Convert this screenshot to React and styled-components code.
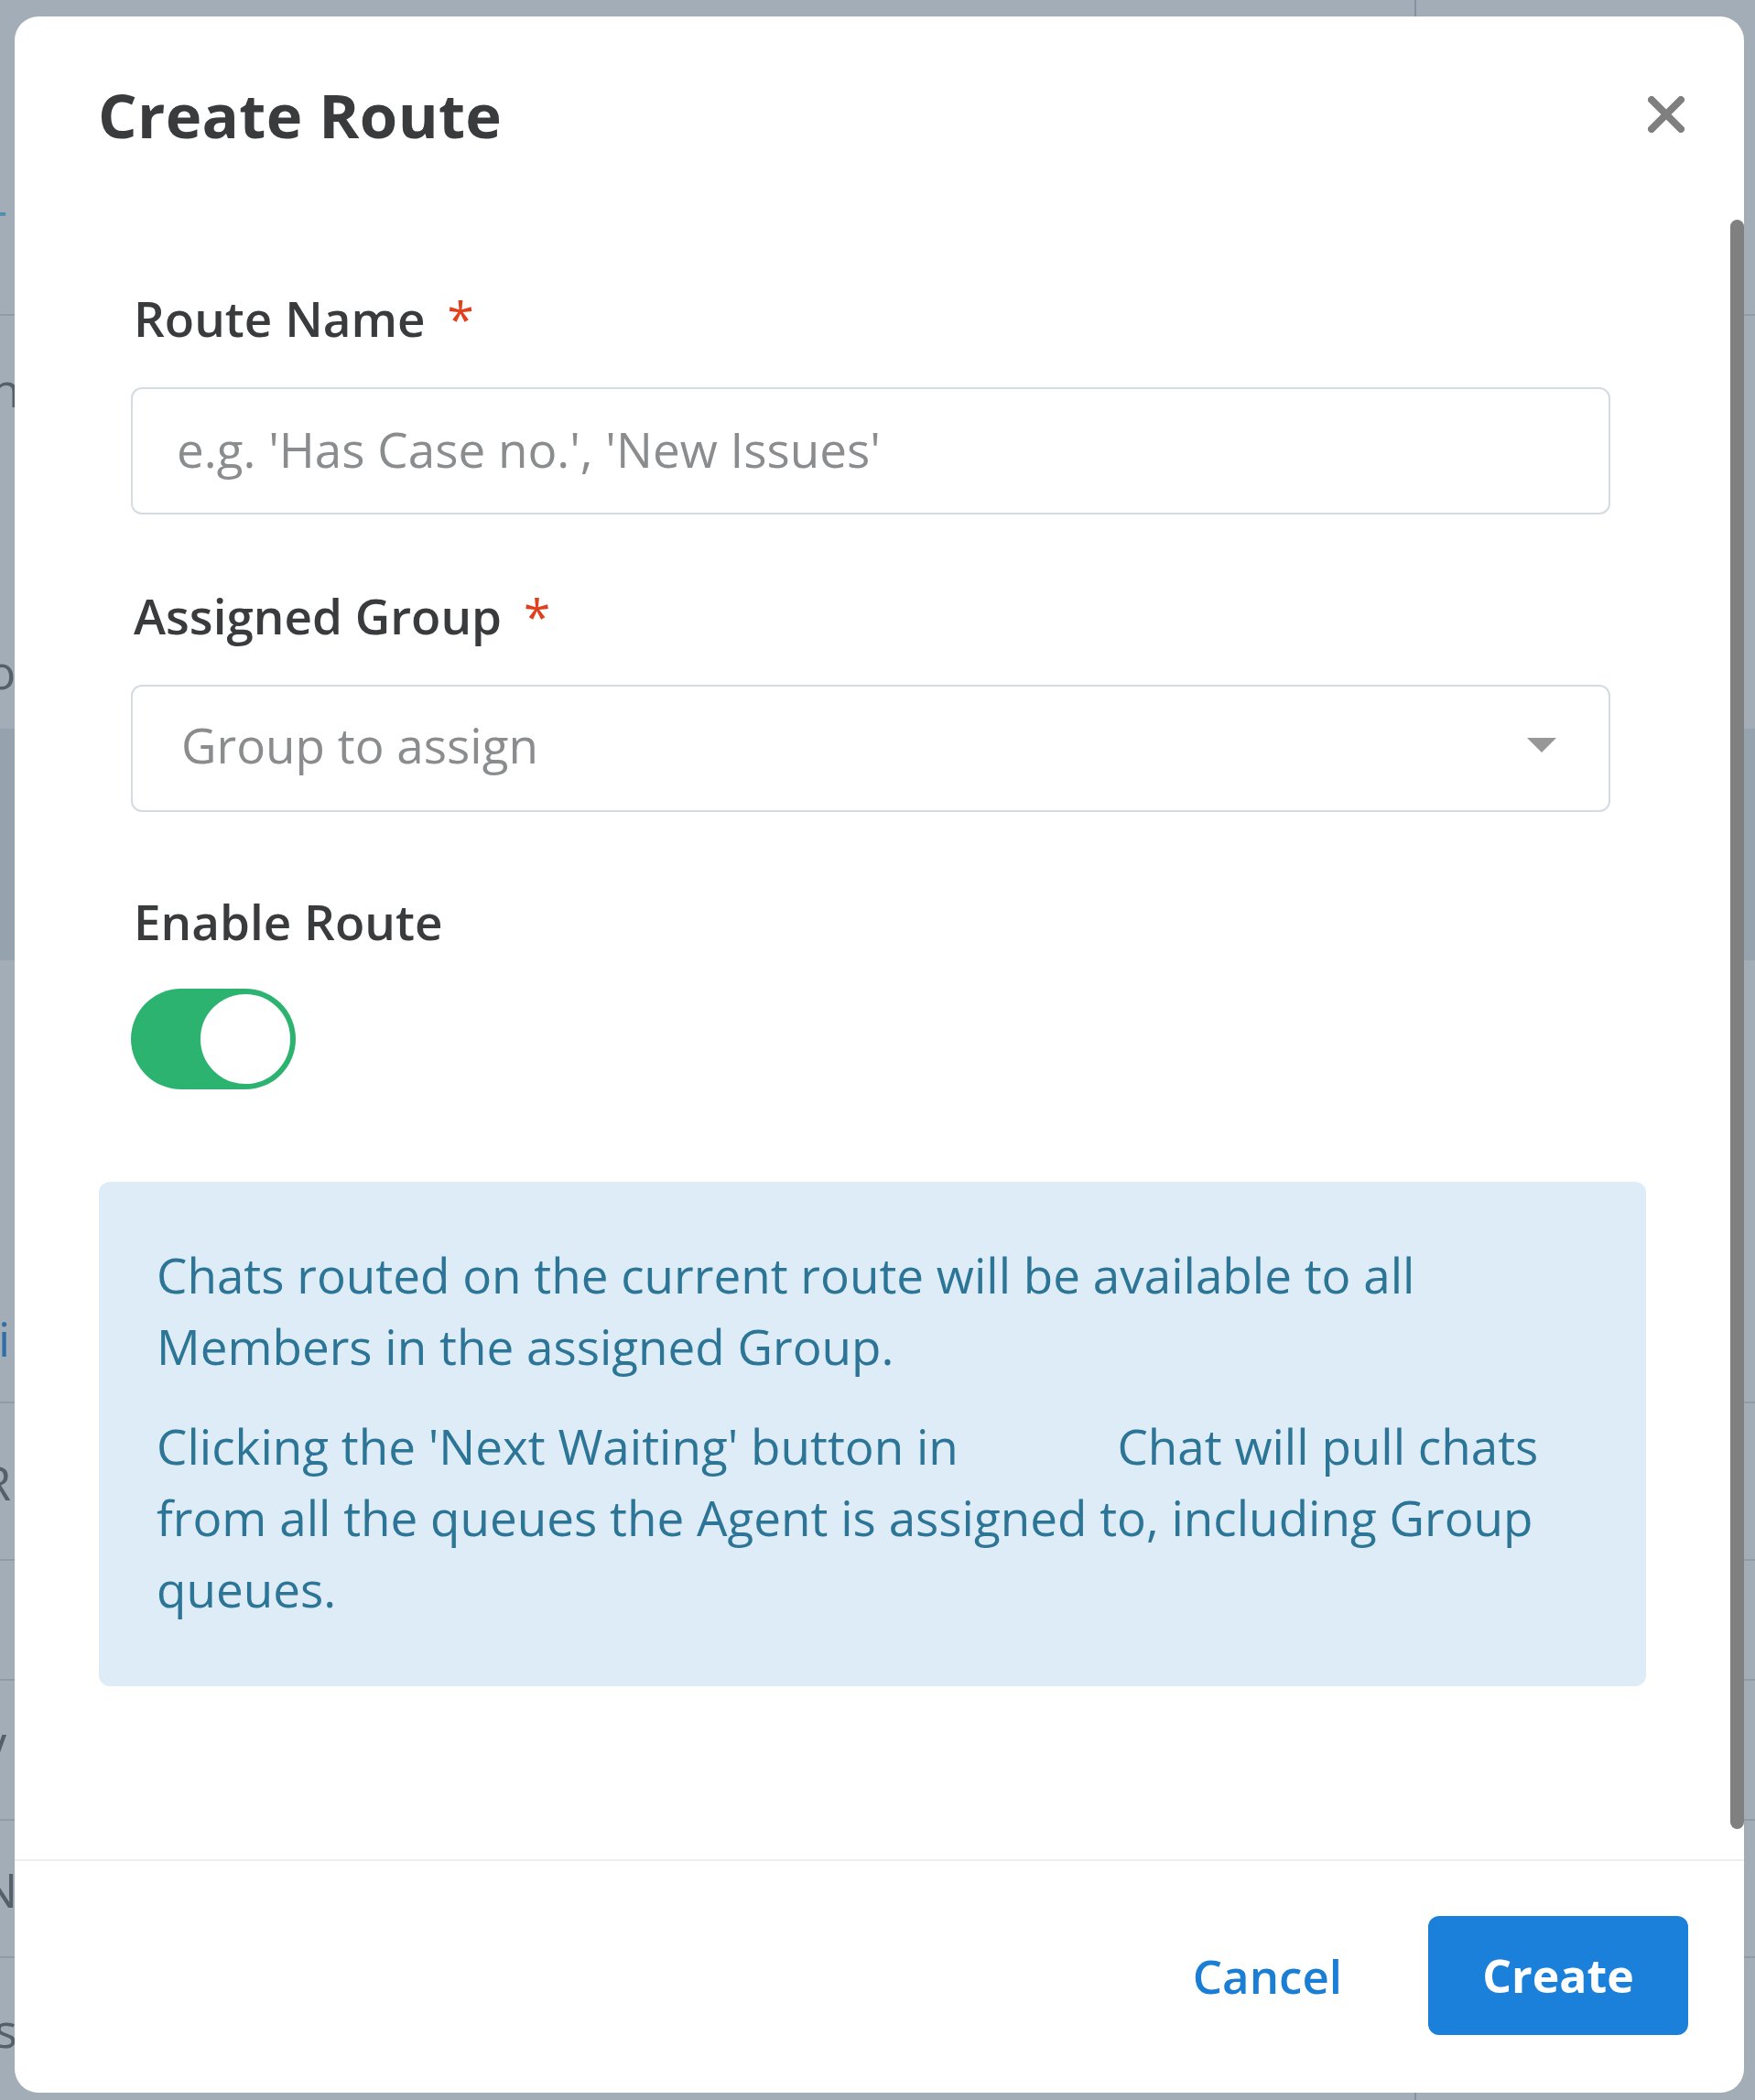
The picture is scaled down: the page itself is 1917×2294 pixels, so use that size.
import React from "react";
import styled, { createGlobalStyle } from "styled-components";

const Global = createGlobalStyle`
  html, body { margin: 0; padding: 0; }
  body {
    background: #a2adb7;
    font-family: "Open Sans", "Noto Sans", sans-serif;
  }
`;

const Screen = styled.div`
  position: relative;
  width: 1917px;
  height: 2294px;
  overflow: hidden;
  background: #a2adb7;
`;

/* dimmed page content behind the dialog */
const Page = styled.div`
  display: flex;
  flex-direction: column;
  height: 100%;
`;

const BgRow = styled.div`
  flex: 0 0 ${(p) => p.$h}px;
  box-sizing: border-box;
  padding-top: ${(p) => p.$off || 0}px;
  border-bottom: ${(p) => (p.$line ? "2px solid rgba(120, 132, 145, 0.45)" : "0")};
  background: ${(p) => (p.$band ? "#96a2ad" : "transparent")};
  overflow: hidden;
`;

const BgText = styled.div`
  font-size: 52px;
  line-height: 72px;
  margin-left: ${(p) => p.$x}px;
  color: ${(p) => p.$c || "#56606a"};
  white-space: nowrap;
`;

const Overlay = styled.div`
  position: absolute;
  inset: 0;
  box-sizing: border-box;
  padding: 18px 12px 8px 16px;
  background: linear-gradient(90deg, transparent 1545px, rgba(120,135,150,0.7) 1545px, rgba(120,135,150,0.7) 1547px, transparent 1547px);
`;

const Modal = styled.div`
  position: relative;
  width: 1889px;
  height: 2268px;
  background: #ffffff;
  border-radius: 26px;
  display: flex;
  flex-direction: column;
  overflow: hidden;
`;

const Header = styled.div`
  display: flex;
  align-items: center;
  justify-content: space-between;
  height: 222px;
  box-sizing: border-box;
  padding: 0 63px 8px 91px;
`;

const Title = styled.h1`
  margin: 0;
  font-size: 67px;
  line-height: 80px;
  font-weight: 700;
  color: #3a3b3d;
  letter-spacing: 0.3px;
`;

const CloseButton = styled.button`
  border: 0;
  background: none;
  padding: 0;
  width: 44px;
  height: 44px;
  display: flex;
  align-items: center;
  justify-content: center;
  cursor: pointer;
`;

const Body = styled.div`
  position: relative;
  flex: 1;
  padding: 72px 107px 0 92px;
`;

const Thumb = styled.div`
  position: absolute;
  right: 0;
  top: 0;
  width: 15px;
  height: 1758px;
  background: #808080;
  border-radius: 8px;
`;

const Fields = styled.div`
  padding: 0 39px 0 35px;
  display: flex;
  flex-direction: column;
`;

const Label = styled.div`
  font-size: 53px;
  line-height: 72px;
  font-weight: 600;
  color: #3a3b3d;
  margin-top: ${(p) => p.$top || 0}px;
  margin-bottom: ${(p) => p.$bottom || 39}px;
  padding-left: 3px;
`;

const Required = styled.span`
  color: #e2401c;
  margin-left: 24px;
  font-weight: 400;
`;

const InputBox = styled.div`
  box-sizing: border-box;
  height: 139px;
  border: 2px solid #d6dbe1;
  border-radius: 12px;
  display: flex;
  align-items: center;
  justify-content: space-between;
  padding: 0 57px ${(p) => p.$lift}px ${(p) => p.$pad}px;
  font-size: 53px;
  color: #8b8c8e;
`;

const Caret = styled.span`
  width: 0;
  height: 0;
  border-left: 16px solid transparent;
  border-right: 16px solid transparent;
  border-top: 16px solid #979797;
`;

const Toggle = styled.div`
  box-sizing: border-box;
  width: 180px;
  height: 110px;
  border-radius: 55px;
  background: #2db370;
  display: flex;
  align-items: center;
  justify-content: flex-end;
  padding: 0 3px;
`;

const Knob = styled.div`
  box-sizing: border-box;
  width: 104px;
  height: 104px;
  border-radius: 50%;
  background: #ffffff;
  border: 3px solid #2db370;
`;

const Info = styled.div`
  margin-top: 101px;
  box-sizing: border-box;
  height: 551px;
  background: #ddecf7;
  border-radius: 12px;
  padding: 63px 40px 0 63px;
  color: #2c7596;
  font-size: 53px;
  line-height: 78px;
`;

const Para = styled.p`
  margin: 0 0 ${(p) => p.$gap || 0}px 0;
`;

const Gap = styled.span`
  display: inline-block;
  width: 146px;
  height: 1px;
`;

const Footer = styled.div`
  border-top: 2px solid #eeeeee;
  height: 255px;
  box-sizing: border-box;
  display: flex;
  align-items: center;
  justify-content: flex-end;
  gap: 62px;
  padding: 0 61px 4px 0;
`;

const CancelButton = styled.button`
  border: 0;
  background: none;
  font-family: inherit;
  font-size: 51px;
  font-weight: 600;
  color: #1a7ed4;
  padding: 0 32px;
  height: 130px;
  cursor: pointer;
`;

const CreateButton = styled.button`
  border: 0;
  width: 284px;
  height: 130px;
  border-radius: 12px;
  background: #1a80d9;
  color: #ffffff;
  font-family: inherit;
  font-size: 50px;
  font-weight: 700;
  cursor: pointer;
`;

const bgRows = [
  { h: 345, t: "T", x: -22, c: "#4f8fa8", off: 213, line: true },
  { h: 300, t: "n", x: -10, off: 44 },
  { h: 151, t: "o", x: -14, off: 52 },
  { h: 253, band: true },
  { h: 341 },
  { h: 143, t: "i", x: -2, c: "#2f6fa6", off: 36, line: true },
  { h: 172, t: "R", x: -20, off: 50, line: true },
  { h: 131, line: true },
  { h: 153, t: "V", x: -24, off: 40, line: true },
  { h: 150, t: "N", x: -20, off: 39, line: true },
  { h: 155, t: "sl", x: -6, off: 42 },
];

export default function App() {
  return (
    <>
      <Global />
      <Screen>
        <Page>
          {bgRows.map((r, i) => (
            <BgRow key={i} $h={r.h} $band={r.band} $off={r.off} $line={r.line}>
              {r.t ? (
                <BgText $x={r.x} $c={r.c}>
                  {r.t}
                </BgText>
              ) : null}
            </BgRow>
          ))}
        </Page>
        <Overlay>
          <Modal>
            <Header>
              <Title>Create Route</Title>
              <CloseButton aria-label="Close">
                <svg width="40" height="40" viewBox="0 0 40 40">
                  <path d="M4 4 L36 36 M36 4 L4 36" stroke="#7f7f7f" strokeWidth="8" strokeLinecap="round" />
                </svg>
              </CloseButton>
            </Header>
            <Body>
              <Thumb />
              <Fields>
                <Label>
                  Route Name<Required>*</Required>
                </Label>
                <InputBox $pad={48} $lift={4}>e.g. 'Has Case no.', 'New Issues'</InputBox>
                <Label $top={75}>
                  Assigned Group<Required>*</Required>
                </Label>
                <InputBox $pad={53} $lift={8}>
                  Group to assign
                  <Caret />
                </InputBox>
                <Label $top={84} $bottom={37}>Enable Route</Label>
                <Toggle>
                  <Knob />
                </Toggle>
              </Fields>
              <Info>
                <Para $gap={31}>
                  Chats routed on the current route will be available to all Members in the assigned Group.
                </Para>
                <Para>
                  Clicking the 'Next Waiting' button in <Gap /> Chat will pull chats from all the queues the Agent is
                  assigned to, including Group queues.
                </Para>
              </Info>
            </Body>
            <Footer>
              <CancelButton>Cancel</CancelButton>
              <CreateButton>Create</CreateButton>
            </Footer>
          </Modal>
        </Overlay>
      </Screen>
    </>
  );
}
